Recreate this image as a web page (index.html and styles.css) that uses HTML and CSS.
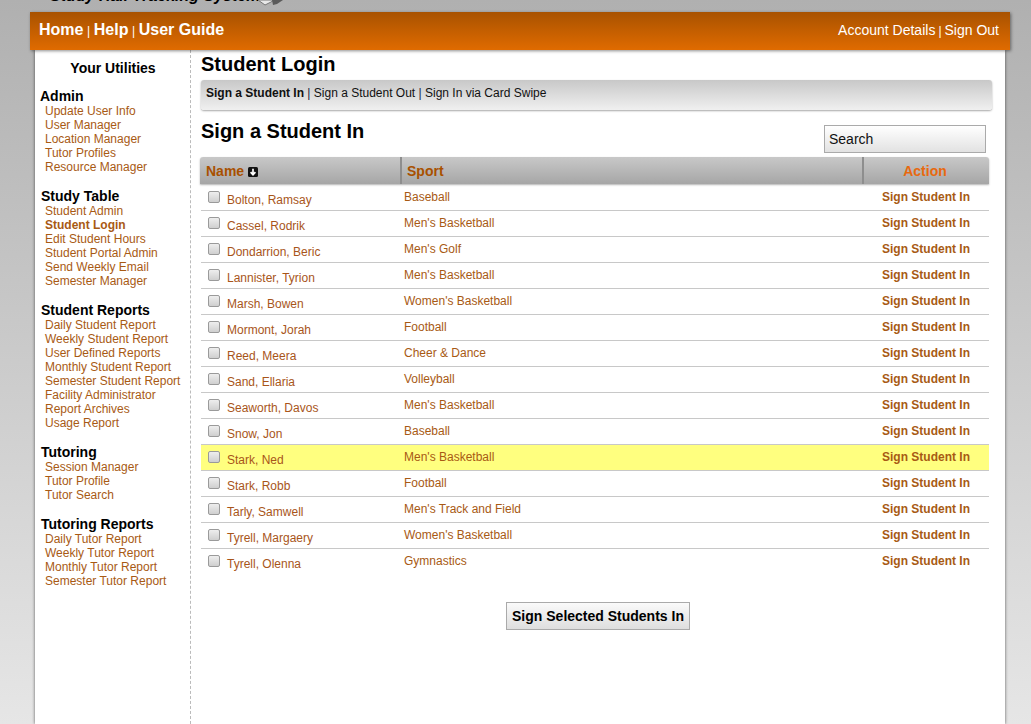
FILE: index.html
```html
<!DOCTYPE html>
<html lang="en">
<head>
<meta charset="utf-8">
<title>Student Login</title>
<link rel="stylesheet" href="styles.css">
</head>
<body>
<div class="logo"><span class="logo-text">Study Hall Tracking System</span><svg class="logo-mark" width="26" height="6" viewBox="0 0 26 6"><path d="M0 0 L7 5 L13 2 L16 0 Z" fill="#e8e8e8" stroke="#777"/><path d="M14 0 L25 0 L19 4 L15 5 Z" fill="#5a5a5a"/></svg></div>
<div class="page">
  <header class="topbar">
    <nav class="topnav"><a href="#">Home</a><span class="sep">|</span><a href="#">Help</a><span class="sep">|</span><a href="#">User Guide</a></nav>
    <nav class="account"><a href="#">Account Details</a><span class="sep">|</span><a href="#">Sign Out</a></nav>
  </header>
  <div class="sheet">
    <aside class="sidebar">
      <h2 class="util-title">Your Utilities</h2>
      <section class="group first">
        <h3>Admin</h3>
        <a href="#">Update User Info</a><a href="#">User Manager</a><a href="#">Location Manager</a><a href="#">Tutor Profiles</a><a href="#">Resource Manager</a>
      </section>
      <section class="group">
        <h3>Study Table</h3>
        <a href="#">Student Admin</a><a href="#" class="current">Student Login</a><a href="#">Edit Student Hours</a><a href="#">Student Portal Admin</a><a href="#">Send Weekly Email</a><a href="#">Semester Manager</a>
      </section>
      <section class="group">
        <h3>Student Reports</h3>
        <a href="#">Daily Student Report</a><a href="#">Weekly Student Report</a><a href="#">User Defined Reports</a><a href="#">Monthly Student Report</a><a href="#">Semester Student Report</a><a href="#">Facility Administrator</a><a href="#">Report Archives</a><a href="#">Usage Report</a>
      </section>
      <section class="group">
        <h3>Tutoring</h3>
        <a href="#">Session Manager</a><a href="#">Tutor Profile</a><a href="#">Tutor Search</a>
      </section>
      <section class="group">
        <h3>Tutoring Reports</h3>
        <a href="#">Daily Tutor Report</a><a href="#">Weekly Tutor Report</a><a href="#">Monthly Tutor Report</a><a href="#">Semester Tutor Report</a>
      </section>
    </aside>
    <main class="main">
      <h1>Student Login</h1>
      <div class="tabs"><a href="#" class="active">Sign a Student In</a> | <a href="#">Sign a Student Out</a> | <a href="#">Sign In via Card Swipe</a></div>
      <div class="title-row">
        <h2>Sign a Student In</h2>
        <input class="search" type="text" value="Search">
      </div>
      <div class="thead">
        <div class="th th-name">Name <svg class="sort" width="10" height="10" viewBox="0 0 10 10"><rect width="10" height="10" rx="1.5" fill="#111"/><path d="M5 1.8V7.5M2.6 5.2L5 7.8L7.4 5.2" fill="none" stroke="#fff" stroke-width="1.7"/></svg></div>
        <div class="th th-sport">Sport</div>
        <div class="th th-action">Action</div>
      </div>
      <div class="rows">
        <div class="row"><label class="name"><span class="check"></span>Bolton, Ramsay</label><a href="#" class="sport">Baseball</a><a href="#" class="act">Sign Student In</a></div>
        <div class="row"><label class="name"><span class="check"></span>Cassel, Rodrik</label><a href="#" class="sport">Men's Basketball</a><a href="#" class="act">Sign Student In</a></div>
        <div class="row"><label class="name"><span class="check"></span>Dondarrion, Beric</label><a href="#" class="sport">Men's Golf</a><a href="#" class="act">Sign Student In</a></div>
        <div class="row"><label class="name"><span class="check"></span>Lannister, Tyrion</label><a href="#" class="sport">Men's Basketball</a><a href="#" class="act">Sign Student In</a></div>
        <div class="row"><label class="name"><span class="check"></span>Marsh, Bowen</label><a href="#" class="sport">Women's Basketball</a><a href="#" class="act">Sign Student In</a></div>
        <div class="row"><label class="name"><span class="check"></span>Mormont, Jorah</label><a href="#" class="sport">Football</a><a href="#" class="act">Sign Student In</a></div>
        <div class="row"><label class="name"><span class="check"></span>Reed, Meera</label><a href="#" class="sport">Cheer &amp; Dance</a><a href="#" class="act">Sign Student In</a></div>
        <div class="row"><label class="name"><span class="check"></span>Sand, Ellaria</label><a href="#" class="sport">Volleyball</a><a href="#" class="act">Sign Student In</a></div>
        <div class="row"><label class="name"><span class="check"></span>Seaworth, Davos</label><a href="#" class="sport">Men's Basketball</a><a href="#" class="act">Sign Student In</a></div>
        <div class="row"><label class="name"><span class="check"></span>Snow, Jon</label><a href="#" class="sport">Baseball</a><a href="#" class="act">Sign Student In</a></div>
        <div class="row hl"><label class="name"><span class="check"></span>Stark, Ned</label><a href="#" class="sport">Men's Basketball</a><a href="#" class="act">Sign Student In</a></div>
        <div class="row"><label class="name"><span class="check"></span>Stark, Robb</label><a href="#" class="sport">Football</a><a href="#" class="act">Sign Student In</a></div>
        <div class="row"><label class="name"><span class="check"></span>Tarly, Samwell</label><a href="#" class="sport">Men's Track and Field</a><a href="#" class="act">Sign Student In</a></div>
        <div class="row"><label class="name"><span class="check"></span>Tyrell, Margaery</label><a href="#" class="sport">Women's Basketball</a><a href="#" class="act">Sign Student In</a></div>
        <div class="row last"><label class="name"><span class="check"></span>Tyrell, Olenna</label><a href="#" class="sport">Gymnastics</a><a href="#" class="act">Sign Student In</a></div>
      </div>
      <div class="submit-row"><button class="submit" type="button">Sign Selected Students In</button></div>
    </main>
  </div>
</div>
</body>
</html>
```
FILE: styles.css
```css
* { box-sizing: border-box; }
html, body { height: 724px; overflow: hidden; }
body {
  margin: 0;
  background: linear-gradient(#b0b0b0, #e6e6e6);
  font-family: "Liberation Sans", Arial, sans-serif;
  font-size: 12px;
  color: #000;
}
a { color: #a85a14; text-decoration: none; }
.logo {
  height: 6px; overflow: hidden; padding-left: 50px;
  display: flex; align-items: flex-end; gap: 0;
  margin-bottom: 6px;
}
.logo-text {
  font-weight: bold; font-style: italic;
  font-size: 16px; line-height: 14px; white-space: nowrap; color: #000;
  flex: none; width: 208px; height: 14px; margin-bottom: 3px;
}
.logo-mark { flex: none; }
.page { width: 980px; margin-left: 30px; }
.topbar {
  height: 38px;
  background: linear-gradient(#a85200, #e06b00);
  box-shadow: 1px 1px 3px rgba(0,0,0,.45);
  display: flex; justify-content: space-between; align-items: center;
  padding: 0 11px 2px 9px;
  position: relative;
}
.topbar a { color: #fff; }
.topnav a { font-size: 16px; font-weight: bold; }
.account a { font-size: 14px; }
.sep { color: #fff; font-size: 12px; margin: 0 3.6px; }
.account .sep { margin: 0 3px; }
.sheet {
  width: 970px; margin-left: 5px; height: 674px;
  background: #fff;
  box-shadow: 0 0 3px rgba(0,0,0,.6);
  display: flex;
}
.sidebar {
  width: 156px; flex: none;
  border-right: 1px dashed #bbb;
  padding: 11px 0 0 5px;
}
.util-title { margin: 0 0 13px; text-align: center; font-size: 14px; line-height: 14px; font-weight: bold; padding-right: 4px; }
.group { margin-bottom: 14px; padding-left: 1px; }
.group.first { padding-left: 0; }
.group h3 { margin: 0; font-size: 14px; line-height: 16px; font-weight: bold; }
.group a { display: block; line-height: 14px; padding-left: 4px; }
.group.first a { padding-left: 5px; }
.group a.current { font-weight: bold; }
.main { flex: 1; padding: 0 0 0 10px; min-width: 0; }
.main h1 { margin: 4px 0 5px; font-size: 20px; line-height: 21px; font-weight: bold; }
.tabs {
  width: 791px; height: 30px;
  background: linear-gradient(#c8c8c8, #f0f0f0);
  border-radius: 3px;
  box-shadow: 0 1px 2px rgba(0,0,0,.35);
  padding: 6px 5px 0;
  line-height: 15px;
  color: #15233f;
}
.tabs a { color: #111; }
.tabs a.active { font-weight: bold; }
.title-row { display: flex; justify-content: space-between; align-items: flex-start; width: 785px; height: 47px; }
.title-row h2 { margin: 10px 0 0; font-size: 20px; line-height: 23px; font-weight: bold; }
.search {
  margin-top: 15px; width: 162px; height: 28px;
  border: 1px solid #aaa; border-radius: 0;
  background: linear-gradient(#fff, #e2e2e2);
  padding: 0 4px;
  font: 14px "Liberation Sans", Arial, sans-serif; color: #111;
}
.thead {
  width: 789px; height: 27px; margin-left: -1px;
  display: flex;
  background: linear-gradient(#c8c8c8, #a6a6a6);
  border-radius: 3px 3px 0 0;
  box-shadow: 0 1px 2px rgba(0,0,0,.3);
}
.th { font-size: 14px; font-weight: bold; color: #a85000; line-height: 28px; }
.th-name { width: 202px; padding-left: 6px; border-right: 2px solid #8e8e8e; }
.th-sport { width: 462px; padding-left: 5px; border-right: 2px solid #8e8e8e; }
.th-action { flex: 1; text-align: center; color: #e8690f; padding-right: 3px; }
.sort { vertical-align: -1px; }
.rows { width: 788px; padding-top: 1px; }
.row {
  height: 26px; display: flex; align-items: flex-start;
  border-bottom: 1px solid #c8c8c8;
}
.row.last { border-bottom: 0; }
.row.hl { background: #ffff7f; }
.name { width: 203px; flex: none; color: #a8551a; padding: 7px 0 0 7px; display: flex; align-items: flex-start; line-height: 16px; }
.check {
  width: 12px; height: 12px; flex: none; margin: -1px 7px 0 0;
  border: 1px solid #9a9a9a; border-radius: 2px;
  background: linear-gradient(#eee, #cfcfcf);
}
.sport { width: 465px; flex: none; padding-top: 5px; line-height: 15px; }
.act { flex: 1; text-align: center; font-weight: bold; padding: 5px 6px 0 0; line-height: 15px; white-space: nowrap; }
.submit-row { width: 793px; text-align: center; padding-top: 27px; }
.submit {
  width: 184px; height: 28px;
  border: 1px solid #aaa; border-radius: 0;
  background: linear-gradient(#fafafa, #dedede);
  font: bold 14px "Liberation Sans", Arial, sans-serif;
  white-space: nowrap;
  color: #000; padding: 0 0 0 1px;
}
```
